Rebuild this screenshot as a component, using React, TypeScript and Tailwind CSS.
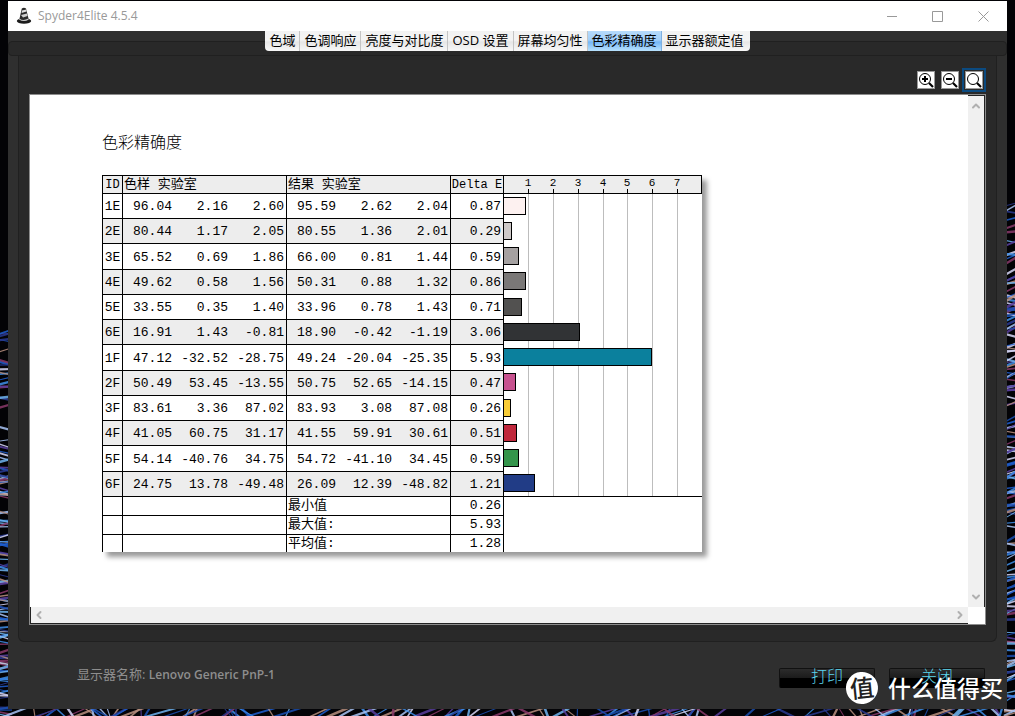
import { useState } from "react"
import { ChevronDown, ChevronLeft, ChevronRight, ChevronUp } from "lucide-react"

const TABS = ["色域", "色调响应", "亮度与对比度", "OSD 设置", "屏幕均匀性", "色彩精确度", "显示器额定值"]

const ROWS = [
    { id: "1E", sample: ["96.04", "2.16", "2.60"], result: ["95.59", "2.62", "2.04"], delta: "0.87", color: "#fdf1f0" },
    { id: "2E", sample: ["80.44", "1.17", "2.05"], result: ["80.55", "1.36", "2.01"], delta: "0.29", color: "#cdc8c7" },
    { id: "3E", sample: ["65.52", "0.69", "1.86"], result: ["66.00", "0.81", "1.44"], delta: "0.59", color: "#a5a1a1" },
    { id: "4E", sample: ["49.62", "0.58", "1.56"], result: ["50.31", "0.88", "1.32"], delta: "0.86", color: "#7a7877" },
    { id: "5E", sample: ["33.55", "0.35", "1.40"], result: ["33.96", "0.78", "1.43"], delta: "0.71", color: "#525150" },
    { id: "6E", sample: ["16.91", "1.43", "-0.81"], result: ["18.90", "-0.42", "-1.19"], delta: "3.06", color: "#313335" },
    { id: "1F", sample: ["47.12", "-32.52", "-28.75"], result: ["49.24", "-20.04", "-25.35"], delta: "5.93", color: "#0b809d" },
    { id: "2F", sample: ["50.49", "53.45", "-13.55"], result: ["50.75", "52.65", "-14.15"], delta: "0.47", color: "#c7528f" },
    { id: "3F", sample: ["83.61", "3.36", "87.02"], result: ["83.93", "3.08", "87.08"], delta: "0.26", color: "#f8cd37" },
    { id: "4F", sample: ["41.05", "60.75", "31.17"], result: ["41.55", "59.91", "30.61"], delta: "0.51", color: "#c0283c" },
    { id: "5F", sample: ["54.14", "-40.76", "34.75"], result: ["54.72", "-41.10", "34.45"], delta: "0.59", color: "#34954b" },
    { id: "6F", sample: ["24.75", "13.78", "-49.48"], result: ["26.09", "12.39", "-48.82"], delta: "1.21", color: "#213c86" },
]

const SUMMARY = [
    { label: "最小值", value: "0.26" },
    { label: "最大值:", value: "5.93" },
    { label: "平均值:", value: "1.28" },
]

const SANS = "font-['Open_Sans','Noto_Sans_CJK_SC',sans-serif]"
const MONO = "font-['Liberation_Mono','Noto_Sans_CJK_SC',monospace]"

// Seeded generator so the light streaks are the same on every load
function makeStreaks() {
    let seed = 11
    const rand = () => {
        seed = (seed * 16807) % 2147483647
        return seed / 2147483647
    }
    const colors = ["#1f5fd0", "#3f8fe8", "#a9c4f5", "#5a3f9e", "#6fb4f0", "#8a3a6a", "#d8d8f8", "#1b4fb0", "#b9907f", "#2a3a90"]
    const list: { x1: number; y1: number; x2: number; y2: number; color: string; w: number }[] = []
    const push = (x1: number, y1: number, x2: number, y2: number) =>
        list.push({ x1, y1, x2, y2, color: colors[Math.floor(rand() * colors.length)], w: 1 + rand() * 1.6 })

    for (let i = 0; i < 120; i++) {
        const y = 334 + rand() * 380
        push(-2, y, 12, y + (rand() - 0.5) * 10)
    }
    for (let i = 0; i < 150; i++) {
        const y = 206 + rand() * 510
        push(1004, y, 1018, y + (rand() - 0.7) * 14)
    }
    for (let i = 0; i < 130; i++) {
        const x = rand() * 1015
        push(x, 718, x + (rand() - 0.35) * 70, 706)
    }
    return list
}

const STREAKS = makeStreaks()

function Wallpaper() {
    return (
        <svg className="absolute inset-0 w-full h-full" viewBox="0 0 1015 716" preserveAspectRatio="none" aria-hidden="true">
            <rect width="1015" height="716" fill="#030306" />
            {STREAKS.map((s, i) => (
                <line key={i} x1={s.x1} y1={s.y1} x2={s.x2} y2={s.y2} stroke={s.color} strokeWidth={s.w} opacity="0.85" />
            ))}
        </svg>
    )
}

function AppIcon() {
    return (
        <svg width="16" height="18" viewBox="0 0 16 18" aria-hidden="true">
            <ellipse cx="8" cy="14" rx="7.2" ry="2.8" fill="#1c1c1c" />
            <path d="M5.8 1.5Q8 0 10 1.5L12.6 12Q8 15 3.4 12Z" fill="#2a2a2a" />
            <path d="M6 3.4L10.4 2.6L10.5 4.6L5.6 6Z" fill="#ddd" />
            <path d="M5 8L10.9 6.4L11.6 9L7 10.6Z" fill="#d0d0d0" />
            <path d="M3.4 11.5Q7 14.6 12.4 11.6L12.8 12.6Q8 15.6 3 12.6Z" fill="#ccc" />
        </svg>
    )
}

function TitleBar() {
    return (
        <header className="flex items-center h-[30px] bg-white text-[#999]">
            <div className="flex items-center gap-1.5 pl-2 flex-1">
                <AppIcon />
                <h1 className="text-[12px] leading-4">Spyder4Elite 4.5.4</h1>
            </div>
            <button aria-label="最小化" className="w-[45px] h-[30px] flex items-center justify-center">
                <svg width="11" height="11" stroke="currentColor"><path d="M0 5.5H10" /></svg>
            </button>
            <button aria-label="最大化" className="w-[45px] h-[30px] flex items-center justify-center">
                <svg width="11" height="11" stroke="currentColor" fill="none"><path d="M.5 .5H10.5V10.5H.5Z" /></svg>
            </button>
            <button aria-label="关闭窗口" className="w-[47px] h-[30px] flex items-center justify-center">
                <svg width="11" height="11" stroke="currentColor"><path d="M.5 .5L10.5 10.5M10.5 .5L.5 10.5" /></svg>
            </button>
        </header>
    )
}

function ZoomButton({ label, mark, active }: { label: string; mark?: string; active?: boolean }) {
    return (
        <button
            aria-label={label}
            className={`w-6 h-6 flex items-center justify-center border-2 ${active ? "border-[#0b4a80]" : "border-transparent"}`}
        >
            <svg width="18" height="18" viewBox="0 0 18 18" fill="none">
                <rect x=".5" y=".5" width="17" height="17" fill="#fff" stroke="#999" />
                <circle cx="8" cy="8" r="5.5" stroke="#000" />
                <path d="M12 12L16 16" stroke="#000" strokeWidth="2.2" />
                {mark && <path d={mark} stroke="#000" strokeWidth="2" />}
            </svg>
        </button>
    )
}

// The row pitch is a fraction, so one row in four gets the extra pixel
const rowHeight = (i: number) => (i % 4 === 2 ? "h-[26px]" : "h-[25px]")

function LabCells({ values }: { values: string[] }) {
    return (
        <>
            <td className="border-b pt-0.5">{values[0]}</td>
            <td className="border-b pt-0.5">{values[1]}</td>
            <td className="border-b border-r pr-0.5 pt-0.5">{values[2]}</td>
        </>
    )
}

function ResultTable() {
    return (
        <table className="table-fixed w-[402px] shrink-0 border-separate border-spacing-0 text-[13px] leading-4 text-right text-black [&_td]:border-black [&_th]:border-black">
            <colgroup>
                <col className="w-[21px]" />
                <col className="w-[49px]" />
                <col className="w-[56px]" />
                <col className="w-[59px]" />
                <col className="w-[49px]" />
                <col className="w-[56px]" />
                <col className="w-[59px]" />
                <col className="w-[53px]" />
            </colgroup>
            <thead>
                <tr className="h-[19px] bg-[#ededed] [&>th]:border-y [&>th]:border-r [&>th]:font-normal [&>th]:p-0">
                    <th className="border-l text-center text-[12px]">ID</th>
                    <th colSpan={3} className="text-left"><span className="pl-px">色样 实验室</span></th>
                    <th colSpan={3} className="text-left"><span className="pl-px">结果 实验室</span></th>
                    <th className="text-[12px] text-center whitespace-nowrap">Delta E</th>
                </tr>
            </thead>
            <tbody>
                {ROWS.map((row, i) => (
                    <tr key={row.id} className={`${rowHeight(i)} ${i % 2 === 1 ? "bg-[#ededed]" : "bg-white"}`}>
                        <td className="border-b border-x pt-0.5 text-center">{row.id}</td>
                        <LabCells values={row.sample} />
                        <LabCells values={row.result} />
                        <td className="border-b border-r pr-0.5 pt-0.5">{row.delta}</td>
                    </tr>
                ))}
                {SUMMARY.map((item, i) => {
                    const line = i < SUMMARY.length - 1 ? "h-[19px] [&>td]:border-b" : "h-[17px]"
                    return (
                        <tr key={item.label} className={line}>
                            <td className="border-x" />
                            <td colSpan={3} className="border-r" />
                            <td colSpan={3} className="border-r pl-px text-left">{item.label}</td>
                            <td className="border-r pr-0.5">{item.value}</td>
                        </tr>
                    )
                })}
            </tbody>
        </table>
    )
}

const toX = (v: number) => Math.round(v * 24.8 - 0.6)

function DeltaChart() {
    return (
        <svg width="198" height="376" viewBox="0 0 198 376" className="shrink-0" shapeRendering="crispEdges" role="img" aria-label="Delta E">
            <rect width="198" height="18" fill="#ededed" />
            <path d="M0 .5H197.5V18.5H0" fill="none" stroke="#000" />
            {[1, 2, 3, 4, 5, 6, 7].map((n) => (
                <g key={n}>
                    <text x={toX(n)} y="11" fontSize="11" textAnchor="middle">{n}</text>
                    <path d={`M${toX(n) + 0.5} 14V18`} stroke="#000" />
                    <path d={`M${toX(n) + 0.5} 19V321`} stroke="#bdbdbd" />
                </g>
            ))}
            {ROWS.map((row, i) => (
                <rect
                    key={row.id}
                    x="-0.5"
                    y={22.5 + i * 25 + Math.floor(i / 4)}
                    width={Math.floor(Number(row.delta) * 24.8) + 0.5}
                    height="17"
                    fill={row.color}
                    stroke="#000"
                />
            ))}
            <path d="M0 321.5H198" stroke="#000" />
        </svg>
    )
}

function Viewer() {
    return (
        <div className="flex-1 min-h-0 grid grid-cols-[1fr_17px] grid-rows-[1fr_17px] bg-white border border-[#8c8c8c]">
            <main className="overflow-hidden pl-[72px] pt-[37px]">
                <h2 className={`${SANS} text-[16px] leading-5 font-light text-black`}>色彩精确度</h2>
                <div className={`${MONO} mt-[23px] w-fit flex bg-white shadow-[5px_5px_5px_rgba(0,0,0,0.4)]`}>
                    <ResultTable />
                    <DeltaChart />
                </div>
            </main>
            <div className="flex flex-col justify-between items-center bg-[#f0f0f0] border-t border-r border-[#222] text-[#b0b0b0] py-1">
                <button aria-label="向上滚动"><ChevronUp size={12} strokeWidth={4} /></button>
                <button aria-label="向下滚动"><ChevronDown size={12} strokeWidth={4} /></button>
            </div>
            <div className="flex justify-between items-center bg-[#f0f0f0] border-l border-b border-[#222] text-[#b0b0b0] px-0.5">
                <button aria-label="向左滚动"><ChevronLeft size={12} strokeWidth={4} /></button>
                <button aria-label="向右滚动"><ChevronRight size={12} strokeWidth={4} /></button>
            </div>
        </div>
    )
}

function FooterButton({ children }: { children: string }) {
    return (
        <button className="w-24 h-5 flex justify-center rounded-[2px] border border-t-[#111] border-x-[#111] border-b-black bg-[linear-gradient(#2c2c2c_0%,#1b1b1b_50%,#000_52%,#000_100%)] text-[16px] leading-[14px] font-light text-[#5cd6ee]">
            {children}
        </button>
    )
}

export default function App() {
    const [tab, setTab] = useState("色彩精确度")

    return (
        <div className={`${SANS} relative h-screen min-h-[700px] flex flex-col pt-px px-2 pb-[7px] overflow-hidden`}>
            <Wallpaper />

            <div className="relative flex-1 min-h-0 flex flex-col bg-[#2f2f2f]">
                <TitleBar />

                {/* Tabs sit over the dark strip */}
                <div className="grid">
                    <div className="col-start-1 row-start-1 mt-2.5 h-[15px] rounded border border-[#202020] bg-[#292929]" />
                    <nav className="col-start-1 row-start-1 justify-self-center self-start z-10 flex h-5 rounded-b overflow-hidden">
                        {TABS.map((name) => (
                            <button
                                key={name}
                                onClick={() => setTab(name)}
                                aria-pressed={tab === name}
                                className={`px-1 pb-0.5 border-r last:border-r-0 last:pr-1.5 text-[13px] leading-[18px] text-black whitespace-nowrap ${tab === name
                                    ? "border-[#7fb0e0] bg-[linear-gradient(#b5dafb_0%,#a3d0fa_45%,#75b6f5_55%,#b8e2fd_100%)]"
                                    : "border-[#c4c4c4] bg-[linear-gradient(#f2f2f2_0%,#f4f4f4_45%,#e6e6e6_55%,#f8f8f8_100%)]"
                                    }`}
                            >
                                {name}
                            </button>
                        ))}
                    </nav>
                </div>

                <section className="flex-1 min-h-0 flex flex-col mx-2.5 px-2.5 pb-4 rounded-b-md border border-t-0 border-[#202020] bg-[#292929]">
                    <div className="flex justify-end pt-3 pb-0.5">
                        <ZoomButton label="放大" mark="M5 8H11M8 5V11" />
                        <ZoomButton label="缩小" mark="M5 8H11" />
                        <ZoomButton label="实际大小" active />
                    </div>
                    <Viewer />
                </section>

                <footer className="flex justify-between items-start h-[67px] pl-[69px] pr-[22px] pt-6">
                    <p className="text-[13px] leading-4 text-[#8e8e8e]">
                        显示器名称: <strong className="text-[12px] font-semibold">Lenovo Generic PnP-1</strong>
                    </p>
                    <div className="flex gap-3.5 pt-0.5">
                        <FooterButton>打印</FooterButton>
                        <FooterButton>关闭</FooterButton>
                    </div>
                </footer>
            </div>

            {/* Site watermark */}
            <div className="absolute right-3 bottom-3 z-20 flex items-center gap-2.5 text-white pointer-events-none">
                <span className="w-8 h-8 flex items-center justify-center rounded-full bg-white text-[24px] leading-none font-medium text-[#222] -rotate-6">值</span>
                <span className="text-[23px] leading-8 font-medium">什么值得买</span>
            </div>
        </div>
    )
}
